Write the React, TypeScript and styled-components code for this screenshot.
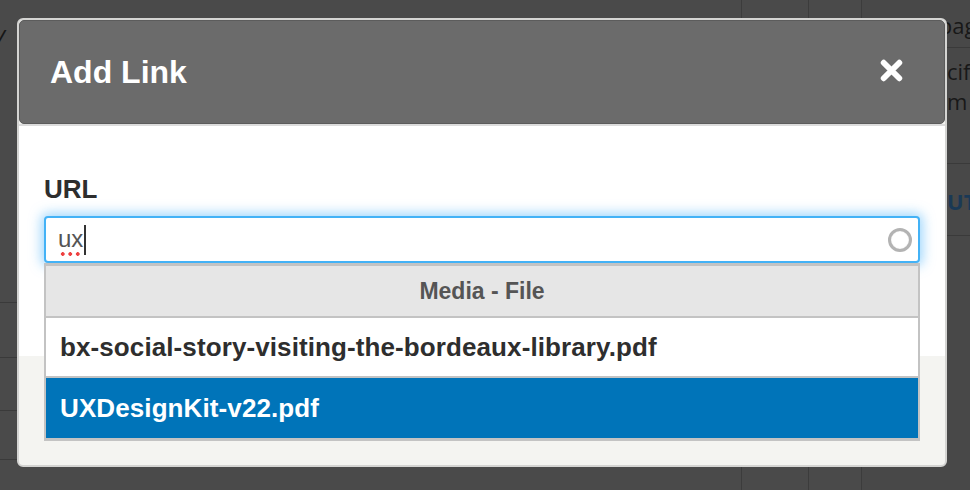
import React from "react";
import styled, { createGlobalStyle } from "styled-components";

const GlobalStyle = createGlobalStyle`
  html, body {
    margin: 0;
    padding: 0;
    width: 970px;
    height: 490px;
    overflow: hidden;
    background: #4a4a4a;
    font-family: "Liberation Sans", Arial, Helvetica, sans-serif;
  }
  * { box-sizing: border-box; }
`;

/* ---------- dimmed page behind the dialog ---------- */
const Page = styled.div`
  display: flex;
  width: 970px;
  height: 490px;
  background: #4a4a4a;
`;

const Column = styled.div<{ $w: number; $line?: boolean; $shade?: string }>`
  width: ${(p) => p.$w}px;
  flex: none;
  height: 100%;
  display: flex;
  flex-direction: column;
  background: ${(p) => p.$shade || "transparent"};
  border-right: ${(p) => (p.$line ? "1px solid #3c3c3c" : "none")};
`;

const Slash = styled.div`
  margin-top: 24px;
  font-family: "Open Sans", sans-serif;
  font-style: italic;
  font-size: 24px;
  line-height: 28px;
  color: #161616;
  margin-left: -4px;
`;

const BgRow = styled.div<{ $h: number }>`
  height: ${(p) => p.$h}px;
  flex: none;
  border-top: 1px solid #3a3a3a;
`;

const Fill = styled.div<{ $h: number }>`
  height: ${(p) => p.$h}px;
  flex: none;
`;

const BgText = styled.div<{ $indent: number; $color?: string; $weight?: number }>`
  font-family: "Open Sans", sans-serif;
  font-size: 22px;
  line-height: 30px;
  color: ${(p) => p.$color || "#181818"};
  font-weight: ${(p) => p.$weight || 400};
  padding-left: ${(p) => p.$indent}px;
  white-space: nowrap;
`;

const BgBlock = styled.div<{ $h: number; $pt: number; $line?: boolean }>`
  height: ${(p) => p.$h}px;
  flex: none;
  padding-top: ${(p) => p.$pt}px;
  border-top: ${(p) => (p.$line ? "1px solid #3a3a3a" : "none")};
  overflow: hidden;
`;

/* ---------- dialog ---------- */
const Overlay = styled.div`
  position: fixed;
  inset: 0;
  padding: 18px 23px 23px 17px;
`;

const Dialog = styled.div`
  width: 930px;
  height: 449px;
  display: flex;
  flex-direction: column;
  border: 2px solid #d4d4d2;
  border-radius: 6px;
  background: #f4f4f1;
`;

const Header = styled.div`
  height: 104px;
  flex: none;
  display: flex;
  align-items: center;
  justify-content: space-between;
  padding: 0 40px 0 30px;
  background: #6b6b6b;
  border: 1px solid #5c5c5c;
  border-radius: 5px;
`;

const Title = styled.h1`
  margin: 0;
  font-size: 32px;
  font-weight: 700;
  color: #ffffff;
  line-height: 36px;
`;

const CloseButton = styled.button`
  border: none;
  background: none;
  padding: 0;
  width: 25px;
  height: 25px;
  display: flex;
  margin-top: -3px;
  cursor: pointer;
`;

const Content = styled.div`
  height: 232px;
  flex: none;
  background: #ffffff;
  border-top: 2px solid #dcdcdc;
  padding: 48px 25px 0 25px;
`;

const Label = styled.label`
  display: block;
  font-size: 26px;
  font-weight: 700;
  color: #2e2e2e;
  line-height: 30px;
  margin-bottom: 12px;
`;

const Field = styled.div`
  position: relative;
`;

const InputBox = styled.div`
  height: 47px;
  display: flex;
  align-items: center;
  padding: 0 6px 0 12px;
  border: 2px solid #43b2f6;
  border-radius: 4px;
  background: #fff;
  box-shadow: 0 0 12px 3px rgba(84, 182, 250, 0.55);
`;

const Typed = styled.span`
  font-size: 24px;
  color: #555;
  line-height: 30px;
  padding-bottom: 2px;
  background-image: radial-gradient(circle, #ee4040 1.6px, transparent 2.1px);
  background-size: 7.5px 4px;
  background-repeat: repeat-x;
  background-position: 1px 100%;
`;

const Caret = styled.span`
  width: 1.5px;
  height: 30px;
  background: #333;
  margin-left: 1px;
`;

const Spinner = styled.span`
  margin-left: auto;
  width: 24px;
  height: 24px;
  border-radius: 50%;
  border: 3.5px solid #b3b3b3;
  box-shadow: inset 0 0 1px #d0d0d0;
`;

const Menu = styled.ul`
  position: absolute;
  top: 100%;
  left: 0;
  right: 0;
  margin: 0;
  padding: 0;
  list-style: none;
  background: #fff;
  border: 2px solid #c3c3c3;
  border-top-width: 3px;
  border-bottom-width: 3px;
  z-index: 2;
`;

const MenuHeader = styled.li`
  height: 52px;
  display: flex;
  align-items: center;
  justify-content: center;
  background: #e6e6e6;
  border-bottom: 2px solid #c3c3c3;
  font-size: 23px;
  font-weight: 700;
  color: #555;
`;

const MenuItem = styled.li<{ $active?: boolean; $last?: boolean }>`
  height: 60px;
  display: flex;
  align-items: center;
  padding-left: 14px;
  font-size: 26px;
  letter-spacing: 0.1px;
  font-weight: 700;
  color: ${(p) => (p.$active ? "#ffffff" : "#2e2e2e")};
  background: ${(p) => (p.$active ? "#0074b9" : "#ffffff")};
  border-bottom: ${(p) => (p.$last ? "none" : "2px solid #c3c3c3")};
`;

const CloseIcon = () => (
  <svg width="25" height="25" viewBox="0 0 24 24">
    <path
      d="M4.5 4.5 L19.5 19.5 M19.5 4.5 L4.5 19.5"
      stroke="#ffffff"
      strokeWidth="5.6"
      strokeLinecap="round"
    />
  </svg>
);

export default function App() {
  return (
    <>
      <GlobalStyle />
      <Page>
        <Column $w={742} $line>
          <Slash>/</Slash>
          <Fill $h={250} />
          <BgRow $h={55} />
          <BgRow $h={53} />
          <BgRow $h={49} />
          <BgRow $h={31} />
        </Column>
        <Column $w={67} $line />
        <Column $w={53} $line />
        <Column $w={108} $shade="#484848">
          <BgBlock $h={47} $pt={10}>
            <BgText $indent={63}>/ pag</BgText>
          </BgBlock>
          <BgBlock $h={116} $pt={8} $line>
            <BgText $indent={85}>cific</BgText>
            <BgText $indent={85}>m</BgText>
          </BgBlock>
          <BgBlock $h={72} $pt={22} $line>
            <BgText $indent={85} $color="#1a3955" $weight={700}>
              UTE
            </BgText>
          </BgBlock>
          <BgBlock $h={255} $pt={0} $line />
        </Column>
      </Page>
      <Overlay>
        <Dialog role="dialog" aria-label="Add Link">
          <Header>
            <Title>Add Link</Title>
            <CloseButton aria-label="Close">
              <CloseIcon />
            </CloseButton>
          </Header>
          <Content>
            <Label>URL</Label>
            <Field>
              <InputBox>
                <Typed>ux</Typed>
                <Caret />
                <Spinner />
              </InputBox>
              <Menu>
                <MenuHeader>Media - File</MenuHeader>
                <MenuItem>bx-social-story-visiting-the-bordeaux-library.pdf</MenuItem>
                <MenuItem $active $last>
                  UXDesignKit-v22.pdf
                </MenuItem>
              </Menu>
            </Field>
          </Content>
        </Dialog>
      </Overlay>
    </>
  );
}
